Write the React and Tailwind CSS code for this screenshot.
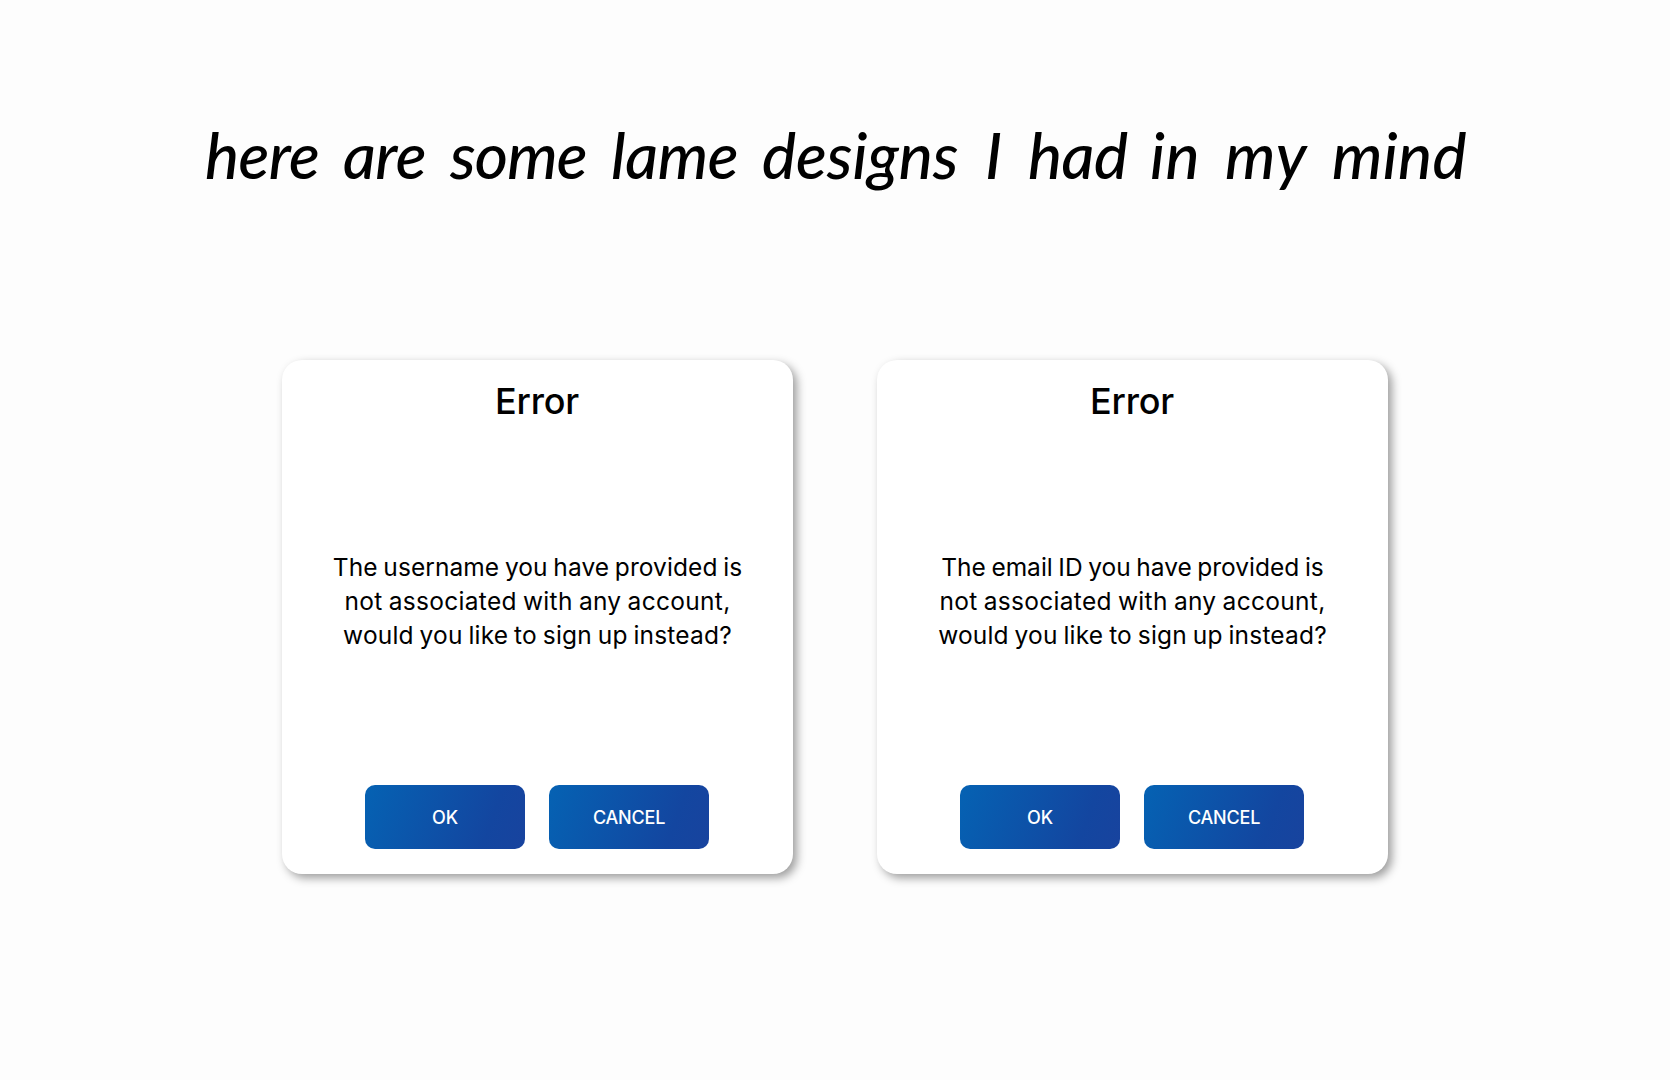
const headline = [
  { text: "here", cls: "w-[138px] tracking-[-0.6px]" },
  { text: "are", cls: "w-[107px] tracking-[-0.6px]" },
  { text: "some", cls: "w-[161px] tracking-[-0.9px]" },
  { text: "lame", cls: "w-[151px] tracking-[-0.4px]" },
  { text: "designs", cls: "w-[223px]" },
  { text: "I", cls: "w-[43px]" },
  { text: "had", cls: "w-[122px] tracking-[-0.5px]" },
  { text: "in", cls: "w-[75px] tracking-[0.5px]" },
  { text: "my", cls: "w-[107px] tracking-[1px]" },
  { text: "mind", cls: "w-[140px] tracking-[0.3px]" },
];

const closingLines = [
  { text: "not associated with any account,", cls: "tracking-[0.3px] [word-spacing:-1px]" },
  { text: "would you like to sign up instead?", cls: "tracking-[0.18px] [word-spacing:-1.2px]" },
];

const dialogs = [
  { text: "The username you have provided is", cls: "tracking-[0.07px] [word-spacing:-1.2px]" },
  { text: "The email ID you have provided is", cls: "[word-spacing:-1.3px]" },
];

function DialogButton({ children }) {
  return (
    <button
      type="button"
      className="h-16 w-40 rounded-[10px] bg-[linear-gradient(110deg,#0562b3_0%,#1346a0_76%,#18439e_100%)] pt-px text-center text-[18px] font-medium tracking-[-0.2px] text-white"
    >
      {children}
    </button>
  );
}

function ErrorDialog({ firstLine }) {
  return (
    <section className="flex h-[514px] w-[511px] flex-col items-center rounded-[20px] bg-white pt-5 pb-[25px] shadow-[4px_4px_10px_rgba(0,0,0,0.38)]">
      <h2 className="pr-px text-[36px] leading-[42px] font-medium tracking-[-0.2px]">Error</h2>
      <div className="mt-32 text-center text-[24.5px] leading-[34px] whitespace-nowrap">
        {[firstLine, ...closingLines].map((line) => (
          <p key={line.text} className={line.cls}>
            {line.text}
          </p>
        ))}
      </div>
      <div className="mt-auto flex gap-6 pr-px">
        <DialogButton>OK</DialogButton>
        <DialogButton>CANCEL</DialogButton>
      </div>
    </section>
  );
}

export default function App() {
  return (
    <main className="h-[1080px] w-[1670px] overflow-hidden bg-[#fdfdfd] font-['Inter',sans-serif] text-black">
      <h1 className="flex pt-[117px] pl-[205px] font-['Lato',sans-serif] text-[64px] leading-[76px] font-medium whitespace-nowrap italic">
        {headline.map((word) => (
          <span key={word.text} className={word.cls}>
            {word.text}
          </span>
        ))}
      </h1>
      <div className="flex gap-[84px] pt-[167px] pl-[282px]">
        {dialogs.map((line) => (
          <ErrorDialog key={line.text} firstLine={line} />
        ))}
      </div>
    </main>
  );
}
